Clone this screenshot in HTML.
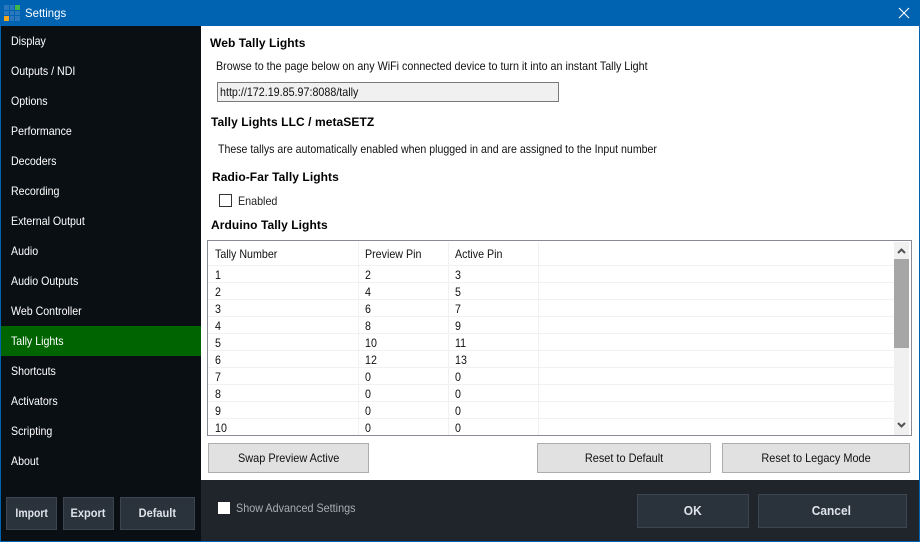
<!DOCTYPE html>
<html>
<head>
<meta charset="utf-8">
<title>Settings</title>
<style>
html,body{margin:0;padding:0;}
body{width:920px;height:542px;position:relative;overflow:hidden;background:#fff;font-family:"Liberation Sans",sans-serif;font-size:12px;color:#111;}
div{position:absolute;box-sizing:border-box;white-space:nowrap;}
.t{line-height:14px;height:14px;transform:scaleX(.894);transform-origin:0 50%;}
.nav{left:11px;color:#fff;line-height:14px;height:14px;transform:scaleX(.885);transform-origin:0 50%;}
.h{font-weight:bold;line-height:14px;height:14px;letter-spacing:.08px;color:#000;}
.btn{background:#e1e1e1;border:1px solid #adadad;text-align:center;color:#111;line-height:28px;height:30px;top:443px;}
.btn span{display:inline-block;transform:scaleX(.91);}
.dbtn{background:#2a323b;border:1px solid #3d4650;text-align:center;color:#dfe3ea;font-weight:bold;}
.dbtn span{display:inline-block;transform:scaleX(.92);}
.rl{left:208px;width:686px;height:1px;background:#f1f1f1;}
.c{color:#111;line-height:14px;height:14px;transform:scaleX(.89);transform-origin:0 50%;}
.sep{width:1px;background:#f1f1f1;}
</style>
</head>
<body>
<!-- window frame -->
<div style="left:0;top:0;width:920px;height:26px;background:#0063b1"></div>
<div style="left:0;top:26px;width:1px;height:516px;background:#0063b1"></div>
<div style="left:919px;top:26px;width:1px;height:516px;background:#0063b1"></div>
<div style="left:0;top:541px;width:920px;height:1px;background:#0063b1"></div>

<!-- title icon -->
<div style="left:4px;top:5px;width:5px;height:5px;background:#2a77bd"></div>
<div style="left:10px;top:5px;width:4px;height:5px;background:#2a77bd"></div>
<div style="left:15px;top:5px;width:5px;height:5px;background:#3fb54a"></div>
<div style="left:4px;top:11px;width:5px;height:4px;background:#2a77bd"></div>
<div style="left:10px;top:11px;width:4px;height:4px;background:#2a77bd"></div>
<div style="left:15px;top:11px;width:5px;height:4px;background:#2a77bd"></div>
<div style="left:4px;top:16px;width:5px;height:5px;background:#f5a81c"></div>
<div style="left:10px;top:16px;width:4px;height:5px;background:#2a77bd"></div>
<div style="left:15px;top:16px;width:5px;height:5px;background:#2a77bd"></div>
<div class="t" style="left:25px;top:6px;color:#fff;transform:scaleX(.95)">Settings</div>
<svg style="position:absolute;left:898px;top:7px" width="12" height="12" viewBox="0 0 12 12"><path d="M1 1L11 11M11 1L1 11" stroke="#fff" stroke-width="1.1" fill="none"/></svg>

<!-- sidebar -->
<div style="left:1px;top:26px;width:200px;height:515px;background:#0a0f14"></div>
<div style="left:1px;top:326px;width:200px;height:30px;background:#006400"></div>
<div class="nav" style="top:34px">Display</div>
<div class="nav" style="top:64px">Outputs / NDI</div>
<div class="nav" style="top:94px">Options</div>
<div class="nav" style="top:124px">Performance</div>
<div class="nav" style="top:154px">Decoders</div>
<div class="nav" style="top:184px">Recording</div>
<div class="nav" style="top:214px">External Output</div>
<div class="nav" style="top:244px">Audio</div>
<div class="nav" style="top:274px">Audio Outputs</div>
<div class="nav" style="top:304px">Web Controller</div>
<div class="nav" style="top:334px">Tally Lights</div>
<div class="nav" style="top:364px">Shortcuts</div>
<div class="nav" style="top:394px">Activators</div>
<div class="nav" style="top:424px">Scripting</div>
<div class="nav" style="top:454px">About</div>
<div class="dbtn" style="left:6px;top:497px;width:51px;height:33px;line-height:31px"><span style="transform:scaleX(.87)">Import</span></div>
<div class="dbtn" style="left:63px;top:497px;width:51px;height:33px;line-height:31px"><span>Export</span></div>
<div class="dbtn" style="left:120px;top:497px;width:75px;height:33px;line-height:31px"><span style="margin-left:-1px">Default</span></div>

<!-- content -->
<div class="h" style="left:210px;top:36px">Web Tally Lights</div>
<div class="t" style="left:216px;top:59px">Browse to the page below on any WiFi connected device to turn it into an instant Tally Light</div>
<div style="left:217px;top:82px;width:342px;height:20px;background:#f0f0f0;border:1px solid #7a7a7a"></div>
<div class="t" style="left:220px;top:85px">http://172.19.85.97:8088/tally</div>
<div class="h" style="left:211px;top:115px">Tally Lights LLC / metaSETZ</div>
<div class="t" style="left:218px;top:142px;transform:scaleX(.882)">These tallys are automatically enabled when plugged in and are assigned to the Input number</div>
<div class="h" style="left:212px;top:170px">Radio-Far Tally Lights</div>
<div style="left:219px;top:194px;width:13px;height:13px;background:#fff;border:1px solid #333"></div>
<div class="t" style="left:238px;top:194px;color:#222">Enabled</div>
<div class="h" style="left:211px;top:218px">Arduino Tally Lights</div>

<!-- list -->
<div style="left:207px;top:240px;width:705px;height:196px;border:1px solid #8a8a92;background:#fff"></div>
<div class="sep" style="left:358px;top:242px;height:193px"></div>
<div class="sep" style="left:448px;top:242px;height:193px"></div>
<div class="sep" style="left:538px;top:242px;height:193px"></div>
<div class="rl" style="top:265px"></div>
<div class="rl" style="top:282px"></div>
<div class="rl" style="top:299px"></div>
<div class="rl" style="top:316px"></div>
<div class="rl" style="top:333px"></div>
<div class="rl" style="top:350px"></div>
<div class="rl" style="top:367px"></div>
<div class="rl" style="top:384px"></div>
<div class="rl" style="top:401px"></div>
<div class="rl" style="top:418px"></div>

<div class="c" style="left:215px;top:247px">Tally Number</div>
<div class="c" style="left:365px;top:247px">Preview Pin</div>
<div class="c" style="left:455px;top:247px">Active Pin</div>

<div class="c" style="left:215px;top:268px">1</div><div class="c" style="left:365px;top:268px">2</div><div class="c" style="left:455px;top:268px">3</div>
<div class="c" style="left:215px;top:285px">2</div><div class="c" style="left:365px;top:285px">4</div><div class="c" style="left:455px;top:285px">5</div>
<div class="c" style="left:215px;top:302px">3</div><div class="c" style="left:365px;top:302px">6</div><div class="c" style="left:455px;top:302px">7</div>
<div class="c" style="left:215px;top:319px">4</div><div class="c" style="left:365px;top:319px">8</div><div class="c" style="left:455px;top:319px">9</div>
<div class="c" style="left:215px;top:336px">5</div><div class="c" style="left:365px;top:336px">10</div><div class="c" style="left:455px;top:336px">11</div>
<div class="c" style="left:215px;top:353px">6</div><div class="c" style="left:365px;top:353px">12</div><div class="c" style="left:455px;top:353px">13</div>
<div class="c" style="left:215px;top:370px">7</div><div class="c" style="left:365px;top:370px">0</div><div class="c" style="left:455px;top:370px">0</div>
<div class="c" style="left:215px;top:387px">8</div><div class="c" style="left:365px;top:387px">0</div><div class="c" style="left:455px;top:387px">0</div>
<div class="c" style="left:215px;top:404px">9</div><div class="c" style="left:365px;top:404px">0</div><div class="c" style="left:455px;top:404px">0</div>
<div class="c" style="left:215px;top:421px">10</div><div class="c" style="left:365px;top:421px">0</div><div class="c" style="left:455px;top:421px">0</div>

<!-- scrollbar -->
<div style="left:894px;top:242px;width:15px;height:193px;background:#f0f0f0"></div>
<div style="left:894px;top:259px;width:15px;height:89px;background:#a6a6a6"></div>
<svg style="position:absolute;left:897px;top:247px" width="9" height="8" viewBox="0 0 9 8"><path d="M1 6L4.500 2.500L8 6" stroke="#505050" stroke-width="2" fill="none"/></svg>
<svg style="position:absolute;left:897px;top:421px" width="9" height="8" viewBox="0 0 9 8"><path d="M1 2L4.500 5.500L8 2" stroke="#505050" stroke-width="2" fill="none"/></svg>

<!-- buttons -->
<div class="btn" style="left:208px;width:161px"><span>Swap Preview Active</span></div>
<div class="btn" style="left:537px;width:174px"><span>Reset to Default</span></div>
<div class="btn" style="left:722px;width:188px"><span>Reset to Legacy Mode</span></div>

<!-- footer -->
<div style="left:201px;top:480px;width:718px;height:61px;background:#1f252a"></div>
<div style="left:218px;top:502px;width:12px;height:12px;background:#fff"></div>
<div class="t" style="left:236px;top:501px;color:#a8adb2;transform:scaleX(.9)">Show Advanced Settings</div>
<div class="dbtn" style="left:637px;top:494px;width:112px;height:34px;line-height:32px;font-size:13px"><span>OK</span></div>
<div class="dbtn" style="left:758px;top:494px;width:149px;height:34px;line-height:32px;font-size:13px"><span style="margin-left:-2px">Cancel</span></div>
</body>
</html>
